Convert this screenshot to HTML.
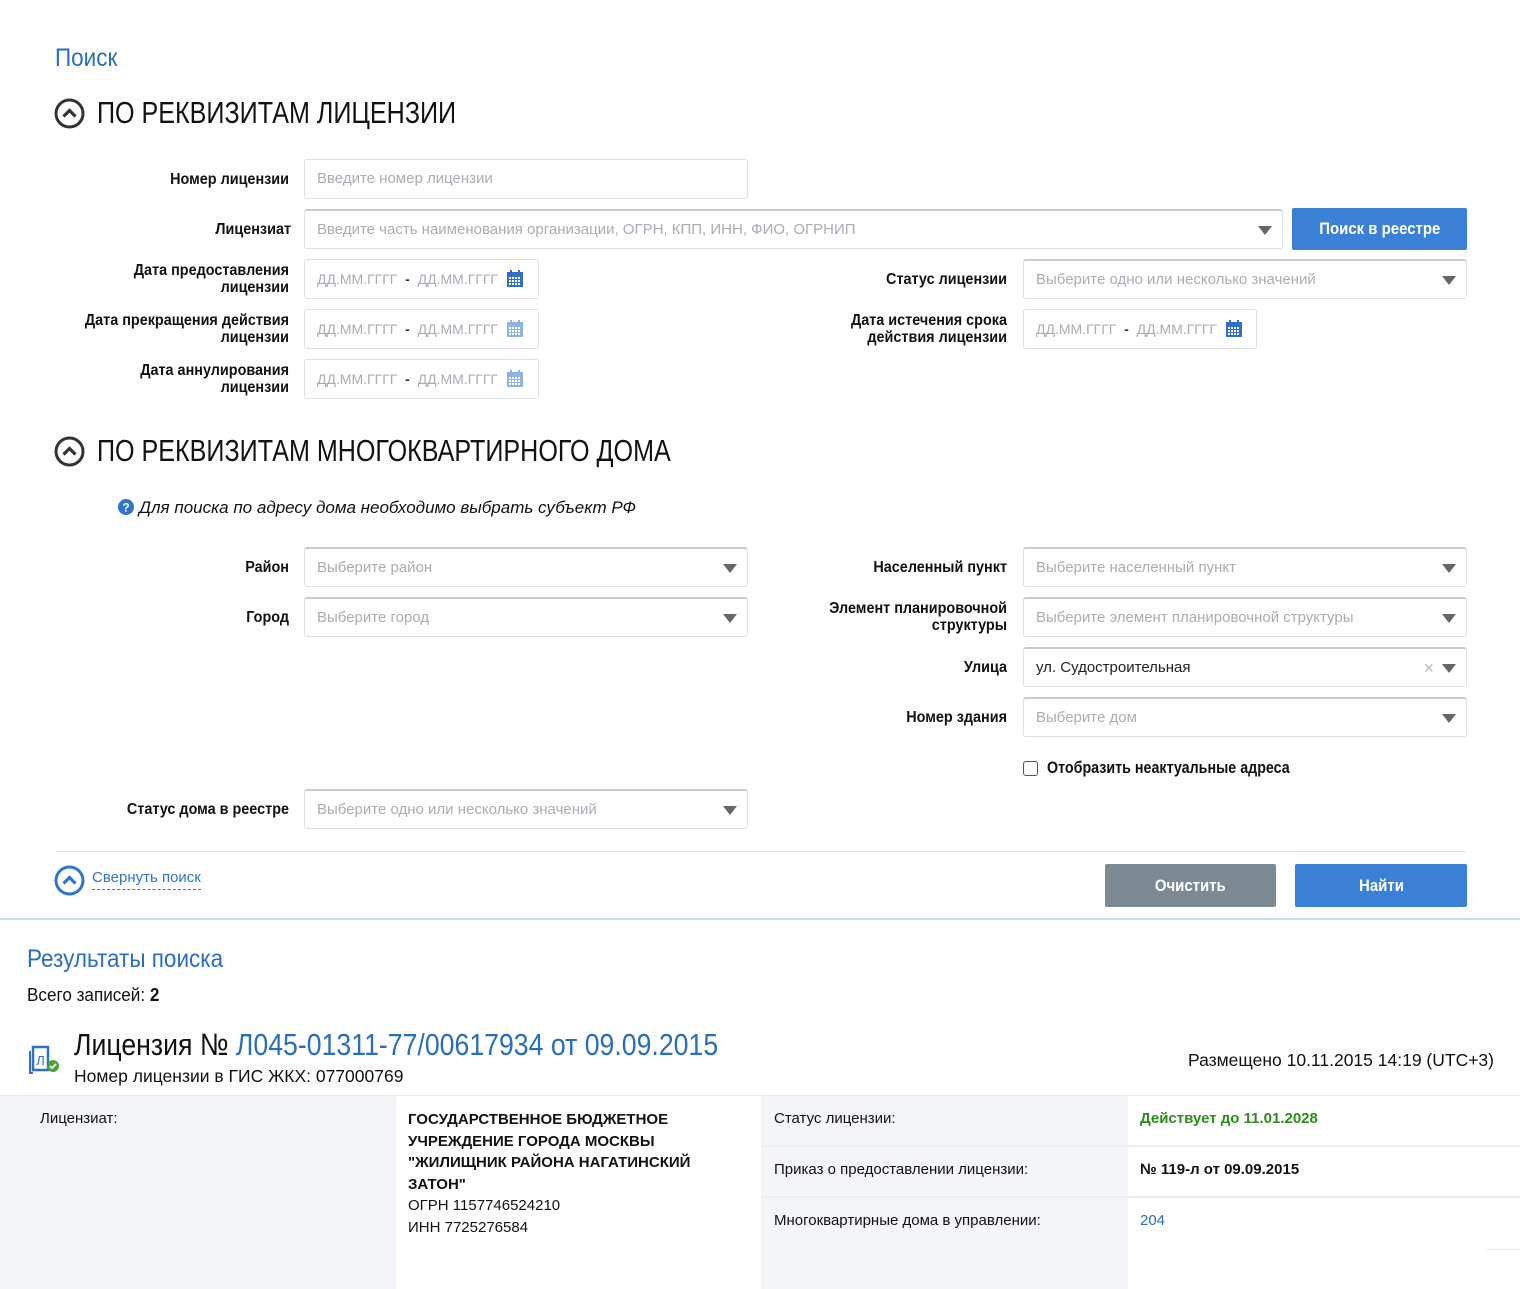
<!DOCTYPE html>
<html><head><meta charset="utf-8"><style>
*{margin:0;padding:0;box-sizing:border-box}
body{width:1520px;height:1289px;position:relative;background:#fff;font-family:"Liberation Sans",sans-serif;color:#111;overflow:hidden}
.a{position:absolute}
.lbl{position:absolute;text-align:right;font-weight:bold;font-size:16px;line-height:17px;color:#111;height:40px;display:flex;flex-direction:column;justify-content:center;align-items:flex-end;transform:scaleX(.9);transform-origin:right center}
.in{position:absolute;height:40px;border:1px solid #dde1e6;border-radius:3px;background:#fff;font-size:15px;color:#a8adb3;padding-left:12px;line-height:38px;white-space:nowrap;overflow:hidden}
.in.d{font-size:14px}
.sel{border-top:2px solid #c8ccd1}
.arr{position:absolute;right:10px;top:15px;width:0;height:0;border-left:7px solid transparent;border-right:7px solid transparent;border-top:9px solid #666}
.h{position:absolute;left:97px;font-size:31px;line-height:36px;color:#111;white-space:nowrap;transform:scaleX(.81);transform-origin:left center}
.btn{position:absolute;color:#fff;font-weight:bold;font-size:17px;text-align:center;border-radius:2px}
.btn span{display:inline-block;transform:scaleX(.88)}
.cal{position:absolute;top:10px;width:18px;height:18px}
</style></head><body>
<div class="a" style="left:55px;top:44px;font-size:25px;color:#2a6ebb;transform:scaleX(.9);transform-origin:left">Поиск</div>

<svg class="a" style="left:54px;top:98px" width="31" height="31"><circle cx="15.5" cy="15.5" r="13.5" fill="none" stroke="#333" stroke-width="3"/><path d="M9.5 18.5 L15.5 12.5 L21.5 18.5" fill="none" stroke="#333" stroke-width="3.2"/></svg>
<div class="h" style="top:95px">ПО РЕКВИЗИТАМ ЛИЦЕНЗИИ</div>

<div class="lbl" style="left:40px;width:249px;top:159px">Номер лицензии</div>
<div class="in" style="left:304px;top:159px;width:444px">Введите номер лицензии</div>

<div class="lbl" style="left:40px;width:251px;top:209px">Лицензиат</div>
<div class="in sel" style="left:304px;top:209px;width:979px">Введите часть наименования организации, ОГРН, КПП, ИНН, ФИО, ОГРНИП<div class="arr"></div></div>
<div class="btn" style="left:1292px;top:208px;width:175px;height:42px;line-height:42px;background:#3a80d6"><span>Поиск в реестре</span></div>

<div class="lbl" style="left:40px;width:249px;top:259px">Дата предоставления<br>лицензии</div>
<div class="in d" style="left:304px;top:259px;width:235px">ДД.ММ.ГГГГ &nbsp;<b style="color:#333">-</b>&nbsp; ДД.ММ.ГГГГ<svg class="cal" style="left:201px" viewBox="0 0 18 18"><rect x="1" y="2" width="16" height="15" fill="#2f6fc6"/><rect x="4" y="0" width="2" height="4" fill="#2f6fc6"/><rect x="12" y="0" width="2" height="4" fill="#2f6fc6"/><g fill="#fff"><rect x="3" y="7" width="2" height="2"/><rect x="6" y="7" width="2" height="2"/><rect x="9" y="7" width="2" height="2"/><rect x="12" y="7" width="2" height="2"/><rect x="3" y="10" width="2" height="2"/><rect x="6" y="10" width="2" height="2"/><rect x="9" y="10" width="2" height="2"/><rect x="12" y="10" width="2" height="2"/><rect x="3" y="13" width="2" height="2"/><rect x="6" y="13" width="2" height="2"/><rect x="9" y="13" width="2" height="2"/><rect x="12" y="13" width="2" height="2"/></g></svg></div>
<div class="lbl" style="left:700px;width:307px;top:259px">Статус лицензии</div>
<div class="in sel" style="left:1023px;top:259px;width:444px">Выберите одно или несколько значений<div class="arr"></div></div>

<div class="lbl" style="left:40px;width:249px;top:309px">Дата прекращения действия<br>лицензии</div>
<div class="in d" style="left:304px;top:309px;width:235px">ДД.ММ.ГГГГ &nbsp;<b style="color:#333">-</b>&nbsp; ДД.ММ.ГГГГ<svg class="cal" style="left:201px" viewBox="0 0 18 18"><rect x="1" y="2" width="16" height="15" fill="#8fb3e3"/><rect x="4" y="0" width="2" height="4" fill="#8fb3e3"/><rect x="12" y="0" width="2" height="4" fill="#8fb3e3"/><g fill="#fff"><rect x="3" y="7" width="2" height="2"/><rect x="6" y="7" width="2" height="2"/><rect x="9" y="7" width="2" height="2"/><rect x="12" y="7" width="2" height="2"/><rect x="3" y="10" width="2" height="2"/><rect x="6" y="10" width="2" height="2"/><rect x="9" y="10" width="2" height="2"/><rect x="12" y="10" width="2" height="2"/><rect x="3" y="13" width="2" height="2"/><rect x="6" y="13" width="2" height="2"/><rect x="9" y="13" width="2" height="2"/><rect x="12" y="13" width="2" height="2"/></g></svg></div>
<div class="lbl" style="left:700px;width:307px;top:309px">Дата истечения срока<br>действия лицензии</div>
<div class="in d" style="left:1023px;top:309px;width:234px">ДД.ММ.ГГГГ &nbsp;<b style="color:#333">-</b>&nbsp; ДД.ММ.ГГГГ<svg class="cal" style="left:201px" viewBox="0 0 18 18"><rect x="1" y="2" width="16" height="15" fill="#2f6fc6"/><rect x="4" y="0" width="2" height="4" fill="#2f6fc6"/><rect x="12" y="0" width="2" height="4" fill="#2f6fc6"/><g fill="#fff"><rect x="3" y="7" width="2" height="2"/><rect x="6" y="7" width="2" height="2"/><rect x="9" y="7" width="2" height="2"/><rect x="12" y="7" width="2" height="2"/><rect x="3" y="10" width="2" height="2"/><rect x="6" y="10" width="2" height="2"/><rect x="9" y="10" width="2" height="2"/><rect x="12" y="10" width="2" height="2"/><rect x="3" y="13" width="2" height="2"/><rect x="6" y="13" width="2" height="2"/><rect x="9" y="13" width="2" height="2"/><rect x="12" y="13" width="2" height="2"/></g></svg></div>

<div class="lbl" style="left:40px;width:249px;top:359px">Дата аннулирования<br>лицензии</div>
<div class="in d" style="left:304px;top:359px;width:235px">ДД.ММ.ГГГГ &nbsp;<b style="color:#333">-</b>&nbsp; ДД.ММ.ГГГГ<svg class="cal" style="left:201px" viewBox="0 0 18 18"><rect x="1" y="2" width="16" height="15" fill="#8fb3e3"/><rect x="4" y="0" width="2" height="4" fill="#8fb3e3"/><rect x="12" y="0" width="2" height="4" fill="#8fb3e3"/><g fill="#fff"><rect x="3" y="7" width="2" height="2"/><rect x="6" y="7" width="2" height="2"/><rect x="9" y="7" width="2" height="2"/><rect x="12" y="7" width="2" height="2"/><rect x="3" y="10" width="2" height="2"/><rect x="6" y="10" width="2" height="2"/><rect x="9" y="10" width="2" height="2"/><rect x="12" y="10" width="2" height="2"/><rect x="3" y="13" width="2" height="2"/><rect x="6" y="13" width="2" height="2"/><rect x="9" y="13" width="2" height="2"/><rect x="12" y="13" width="2" height="2"/></g></svg></div>

<svg class="a" style="left:54px;top:436px" width="31" height="31"><circle cx="15.5" cy="15.5" r="13.5" fill="none" stroke="#333" stroke-width="3"/><path d="M9.5 18.5 L15.5 12.5 L21.5 18.5" fill="none" stroke="#333" stroke-width="3.2"/></svg>
<div class="h" style="top:433px">ПО РЕКВИЗИТАМ МНОГОКВАРТИРНОГО ДОМА</div>

<svg class="a" style="left:118px;top:499px" width="16" height="16"><circle cx="8" cy="8" r="8" fill="#2f74cf"/><text x="8" y="12.5" text-anchor="middle" font-size="12" font-weight="bold" fill="#fff" font-family="Liberation Sans">?</text></svg>
<div class="a" style="left:139px;top:498px;font-size:17px;font-style:italic;color:#111">Для поиска по адресу дома необходимо выбрать субъект РФ</div>

<div class="lbl" style="left:40px;width:249px;top:547px">Район</div>
<div class="in sel" style="left:304px;top:547px;width:444px">Выберите район<div class="arr"></div></div>
<div class="lbl" style="left:40px;width:249px;top:597px">Город</div>
<div class="in sel" style="left:304px;top:597px;width:444px">Выберите город<div class="arr"></div></div>

<div class="lbl" style="left:700px;width:307px;top:547px">Населенный пункт</div>
<div class="in sel" style="left:1023px;top:547px;width:444px">Выберите населенный пункт<div class="arr"></div></div>
<div class="lbl" style="left:700px;width:307px;top:597px">Элемент планировочной<br>структуры</div>
<div class="in sel" style="left:1023px;top:597px;width:444px">Выберите элемент планировочной структуры<div class="arr"></div></div>
<div class="lbl" style="left:700px;width:307px;top:647px">Улица</div>
<div class="in sel" style="left:1023px;top:647px;width:444px;color:#222">ул. Судостроительная<span class="a" style="right:32px;top:0;color:#bbb;font-size:18px">×</span><div class="arr"></div></div>
<div class="lbl" style="left:700px;width:307px;top:697px">Номер здания</div>
<div class="in sel" style="left:1023px;top:697px;width:444px">Выберите дом<div class="arr"></div></div>

<div class="a" style="left:1023px;top:761px;width:15px;height:15px;border:1px solid #555;border-radius:3px"></div>
<div class="a" style="left:1047px;top:758px;font-size:17px;font-weight:bold;color:#111;white-space:nowrap;transform:scaleX(.84);transform-origin:left">Отобразить неактуальные адреса</div>

<div class="lbl" style="left:40px;width:249px;top:789px">Статус дома в реестре</div>
<div class="in sel" style="left:304px;top:789px;width:444px">Выберите одно или несколько значений<div class="arr"></div></div>

<div class="a" style="left:55px;top:851px;width:1411px;height:1px;background:#e3e6ea"></div>
<svg class="a" style="left:54px;top:865px" width="31" height="31"><circle cx="15.5" cy="15.5" r="13.5" fill="none" stroke="#2f74cf" stroke-width="3"/><path d="M9.5 18.5 L15.5 12.5 L21.5 18.5" fill="none" stroke="#2f74cf" stroke-width="3.2"/></svg>
<div class="a" style="left:92px;top:869px;font-size:15px;color:#2f74cf;border-bottom:1px dashed #2f74cf;padding-bottom:3px">Свернуть поиск</div>
<div class="btn" style="left:1105px;top:864px;width:171px;height:43px;line-height:43px;background:#7d8993"><span>Очистить</span></div>
<div class="btn" style="left:1295px;top:864px;width:172px;height:43px;line-height:43px;background:#3a80d6"><span>Найти</span></div>

<div class="a" style="left:0;top:918px;width:1520px;height:2px;background:#c4dcf3"></div>

<div class="a" style="left:27px;top:945px;font-size:25px;color:#2a6ebb;white-space:nowrap;transform:scaleX(.9);transform-origin:left">Результаты поиска</div>
<div class="a" style="left:27px;top:985px;font-size:18px;color:#111;white-space:nowrap;transform:scaleX(.95);transform-origin:left">Всего записей: <b>2</b></div>

<svg class="a" style="left:27px;top:1043px" width="34" height="32"><path d="M6 4 h15 v23 h-15 z" fill="none" stroke="#2f6fc6" stroke-width="2.5"/><path d="M3 8 v22 h3" fill="none" stroke="#2f6fc6" stroke-width="2"/><text x="13.5" y="22" text-anchor="middle" font-size="13" fill="#2f6fc6" font-family="Liberation Sans">Л</text><circle cx="26" cy="23" r="6" fill="#49a536"/><path d="M23 23 l2 2 l4 -4" fill="none" stroke="#fff" stroke-width="1.8"/></svg>
<div class="a" style="left:74px;top:1027px;font-size:31px;color:#111;white-space:nowrap;transform:scaleX(.86);transform-origin:left">Лицензия № <span style="color:#2a6ebb">Л045-01311-77/00617934 от 09.09.2015</span></div>
<div class="a" style="left:74px;top:1066px;font-size:17.5px;color:#111">Номер лицензии в ГИС ЖКХ: 077000769</div>
<div class="a" style="right:26px;top:1050px;font-size:17.5px;color:#111">Размещено 10.11.2015 14:19 (UTC+3)</div>

<div class="a" style="left:0;top:1095px;width:1520px;height:1px;background:#e6e9ee"></div>
<div class="a" style="left:0;top:1096px;width:395px;height:193px;background:#f3f5f9"></div>
<div class="a" style="left:761px;top:1096px;width:367px;height:193px;background:#f3f5f9"></div>
<div class="a" style="left:395px;top:1096px;width:1px;height:193px;background:#eceef2"></div>
<div class="a" style="left:761px;top:1145px;width:759px;height:2px;background:#eaedf1"></div>
<div class="a" style="left:761px;top:1196px;width:759px;height:2px;background:#eaedf1"></div>
<div class="a" style="left:1486px;top:1249px;width:34px;height:1px;background:#eaedf1"></div>

<div class="a" style="left:40px;top:1110px;font-size:15px">Лицензиат:</div>
<div class="a" style="left:408px;top:1109px;font-size:15px;line-height:21.5px;width:340px"><b>ГОСУДАРСТВЕННОЕ БЮДЖЕТНОЕ УЧРЕЖДЕНИЕ ГОРОДА МОСКВЫ "ЖИЛИЩНИК РАЙОНА НАГАТИНСКИЙ ЗАТОН"</b><br>ОГРН 1157746524210<br>ИНН 7725276584</div>
<div class="a" style="left:774px;top:1110px;font-size:15px">Статус лицензии:</div>
<div class="a" style="left:1140px;top:1110px;font-size:15px;font-weight:bold;color:#2e8b1e">Действует до 11.01.2028</div>
<div class="a" style="left:774px;top:1161px;font-size:15px">Приказ о предоставлении лицензии:</div>
<div class="a" style="left:1140px;top:1161px;font-size:15px;font-weight:bold">№ 119-л от 09.09.2015</div>
<div class="a" style="left:774px;top:1212px;font-size:15px">Многоквартирные дома в управлении:</div>
<div class="a" style="left:1140px;top:1212px;font-size:15px;color:#2a6ebb">204</div>
</body></html>
